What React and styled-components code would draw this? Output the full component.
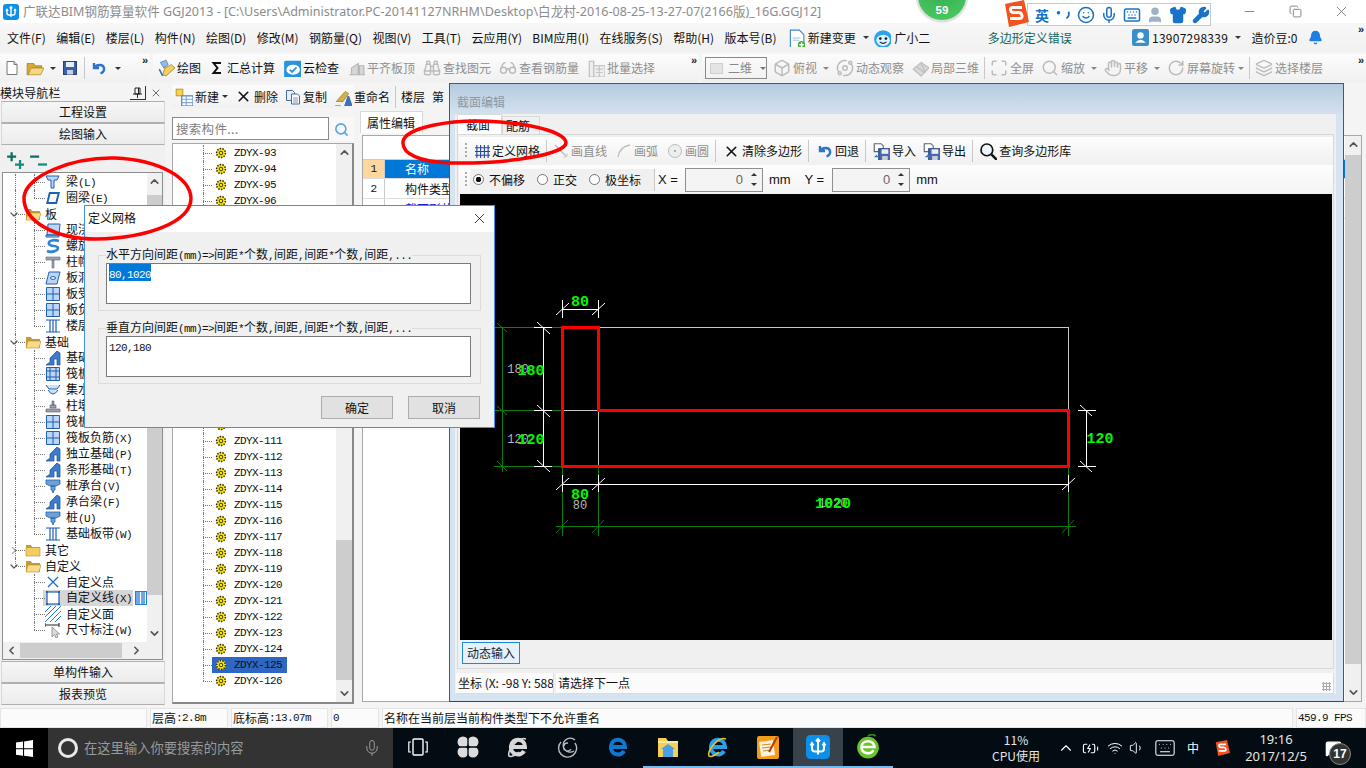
import React from 'react';
import styled, { createGlobalStyle } from 'styled-components';
import {
  Binoculars, Glasses, Box, Orbit, Hand, RotateCw, Layers, Maximize, Search, Smile, Mic, Keyboard, Shirt, Wrench, User, Bell, X,
  Minus, Copy, ChevronDown, ChevronUp, ChevronLeft, ChevronRight, Wifi, Volume1, BatteryCharging, MessageSquare,
} from 'lucide-react';

const CJK = '"Noto Sans CJK SC", "Noto Sans", sans-serif';

const Global = createGlobalStyle`
  html, body { margin: 0; padding: 0; background: #f4f4f4; overflow: hidden; }
  * { box-sizing: border-box; }
  body { font-family: ${CJK}; font-size: 12px; color: #111; }
`;

const Page = styled.div`
  position: relative;
  width: 1366px;
  height: 768px;
  overflow: hidden;
  display: flex;
  flex-direction: column;
  line-height: 16px;
  white-space: nowrap;
`;

/* half-width latin runs, the app draws them in a 6px-per-char bitmap font */
const Half = styled.span`
  font-family: "Liberation Mono", monospace;
  font-size: 11px;
  letter-spacing: -0.6px;
`;

const Sim = ({ children }) => (
  <>
    {String(children).split(/([\x20-\x7e]+)/).map((run, i) => (i % 2 ? <Half key={i}>{run}</Half> : run))}
  </>
);

/* ---------- title bar ---------- */
const TitleBar = styled.div`
  height: 23px;
  flex: none;
  display: flex;
  align-items: center;
  padding-left: 3px;
  background: #fff;
`;
const TitleText = styled.span`
  margin-left: 4px;
  color: #8c8c8c;
  font-family: "Noto Sans", "Noto Sans CJK SC", sans-serif;
  font-size: 12.55px;
`;
const WinButtons = styled.div`
  margin-left: auto;
  padding-right: 2px;
  display: flex;
  color: #8a8a8a;
`;
const WinButton = styled.span`
  width: 46px;
  height: 20px;
  display: flex;
  align-items: center;
  justify-content: center;
`;

/* ---------- menu ---------- */
const MenuBar = styled.div`
  height: 29px;
  flex: none;
  display: flex;
  align-items: center;
  gap: 10.4px;
  padding-left: 7px;
  background: linear-gradient(#f7f7f7, #f1f1f1);
`;
const MenuItem = styled.span`
  display: inline-flex;
  align-items: center;
  gap: 3px;
  margin-left: ${(p) => p.$ml || 0}px;
  color: ${(p) => p.$color || '#111'};
  letter-spacing: ${(p) => p.$spread || 0}px;
`;
const Caret = styled.i`
  display: inline-block;
  width: 0;
  height: 0;
  margin-left: ${(p) => p.$ml ?? 4}px;
  border-left: 3px solid transparent;
  border-right: 3px solid transparent;
  border-top: ${(p) => (p.$up ? 'none' : `3px solid ${p.$color || '#333'}`)};
  border-bottom: ${(p) => (p.$up ? `3px solid ${p.$color || '#333'}` : 'none')};
`;
const More = styled.span`
  font: bold 11px "Liberation Sans", sans-serif;
  color: #222;
  letter-spacing: -1px;
  margin-left: auto;
  align-self: flex-start;
  padding: 0 3px 0 0;
`;

/* ---------- main toolbar ---------- */
const ToolRow = styled.div`
  height: 28px;
  margin-top: 2px;
  flex: none;
  display: flex;
  gap: 3px;
`;
const ToolGroup = styled.div`
  width: ${(p) => p.$w}px;
  flex: none;
  display: flex;
  align-items: center;
  gap: ${(p) => p.$gap ?? 7}px;
  padding-left: ${(p) => p.$pl ?? 4}px;
  background: linear-gradient(#fcfcfc, #f0f0f0);
`;
const Tool = styled.span`
  display: inline-flex;
  align-items: center;
  gap: 2px;
  flex: none;
  margin-left: ${(p) => p.$ml || 0}px;
  color: ${(p) => (p.$dim ? '#8f8f8f' : '#111')};
  svg { flex: none; }
`;
const Sep = styled.i`
  width: 1px;
  height: 22px;
  flex: none;
  margin-left: ${(p) => p.$ml || 0}px;
  background: #c8c8c8;
`;
const Combo = styled.span`
  width: 62px;
  height: 22px;
  flex: none;
  display: inline-flex;
  align-items: center;
  gap: 5px;
  padding-left: 4px;
  border: 1px solid #8a8a8a;
  color: #888;
`;
const ComboSwatch = styled.i`
  width: 15px;
  height: 11px;
  background: #e4e4e4;
  border: 1px solid #d0d0d0;
`;

/* ---------- workspace ---------- */
const Workspace = styled.div`
  height: 624px;
  margin-top: 2px;
  flex: none;
  display: flex;
`;
const Nav = styled.div`
  width: 165px;
  flex: none;
  display: flex;
  flex-direction: column;
`;
const NavHead = styled.div`
  height: 17px;
  flex: none;
  display: flex;
  align-items: center;
  padding-right: 3px;
  letter-spacing: 0.1px;
`;
const NavPin = styled.span`
  margin-left: auto;
  width: 16px;
  height: 14px;
  margin-right: 4px;
  border-bottom: 1px solid #333;
  border-right: 1px solid #333;
  display: flex;
  align-items: center;
  justify-content: center;
`;
const NavButton = styled.div`
  height: 22px;
  margin: 0 0 0 1px;
  flex: none;
  display: flex;
  align-items: center;
  justify-content: center;
  background: linear-gradient(#f6f6f6, #ececec);
  border-top: 1px solid #b0b0b0;
  border-bottom: 1px solid #b0b0b0;
  border-left: 1px solid #d8d8d8;
  border-right: 1px solid #d8d8d8;
`;
const NavBody = styled.div`
  height: 516px;
  flex: none;
  display: flex;
  flex-direction: column;
  padding: 3px 2px 1px 2px;
  background: #f0f0f0;
`;
const ExpandBar = styled.div`
  height: 24px;
  flex: none;
  display: flex;
  align-items: center;
  gap: 5px;
  padding-left: 4px;
`;
const TreeFrame = styled.div`
  flex: 1;
  display: flex;
  flex-direction: column;
  border: 1px solid #8e8e8e;
  background: #fff;
  min-height: 0;
`;
const TreeScrollRow = styled.div`
  flex: 1;
  display: flex;
  min-height: 0;
`;
const TreeList = styled.div`
  flex: 1;
  overflow: hidden;
  padding-top: ${(p) => p.$top}px;
`;
const TreeRow = styled.div`
  position: relative;
  height: 16px;
  display: flex;
  align-items: center;
  padding-left: ${(p) => p.$indent}px;
  &::before {
    content: '';
    position: absolute;
    left: ${(p) => p.$lineX}px;
    top: 0;
    height: ${(p) => (p.$last ? 8 : 16)}px;
    border-left: 1px dotted #777;
  }
  &::after {
    content: '';
    position: absolute;
    left: ${(p) => p.$lineX}px;
    top: 8px;
    width: ${(p) => p.$dash}px;
    border-top: 1px dotted #777;
  }
`;
const RootGuide = styled.i`
  position: absolute;
  left: 12px;
  top: 0;
  height: 16px;
  border-left: 1px dotted #777;
`;
const Fold = styled.span`
  width: 12px;
  flex: none;
  display: flex;
  justify-content: center;
  color: #555;
  margin-right: 5px;
`;
const Label = styled.span`
  margin-left: ${(p) => p.$ml}px;
  padding: 0 1px;
`;
const SelBar = styled.span`
  position: relative;
  display: inline-flex;
  align-items: center;
  margin-left: -2px;
  padding-left: 2px;
  height: 16px;
  background: #d6d6d6;
`;
const SplitMark = styled.i`
  position: relative;
  width: 13px;
  height: 14px;
  margin-left: 2px;
  border: 1px solid #1f7fe0;
  background: repeating-linear-gradient(90deg, #6fa8e8 0 4px, #fff 4px 5px);
`;
const VScroll = styled.div`
  width: ${(p) => p.$w || 15}px;
  flex: none;
  display: flex;
  flex-direction: column;
  align-items: center;
  background: #f0f0f0;
  color: #555;
`;
const ScrollEnd = styled.span`
  height: 17px;
  flex: none;
  width: 100%;
  display: flex;
  align-items: center;
  justify-content: center;
`;
const ScrollSpace = styled.span`
  flex: ${(p) => p.$grow};
  width: 100%;
`;
const ScrollThumb = styled.span`
  flex: ${(p) => p.$grow};
  width: 100%;
  background: #cdcdcd;
`;
const HScroll = styled.div`
  height: 17px;
  flex: none;
  display: flex;
  align-items: center;
  background: #f0f0f0;
  color: #555;
`;
const HThumb = styled.span`
  width: 102px;
  height: 15px;
  background: #cdcdcd;
  margin: 0 6px 0 0;
`;
const HEnd = styled.span`
  width: 17px;
  flex: none;
  display: flex;
  justify-content: center;
`;

/* component tree column */
const ListColumn = styled.div`
  width: 182px;
  margin-left: 7px;
  flex: none;
  display: flex;
  flex-direction: column;
`;
const ListTools = styled.div`
  height: 23px;
  margin-top: 1px;
  flex: none;
  display: flex;
  align-items: center;
  gap: 7px;
  padding-left: 3px;
  background: linear-gradient(#fbfbfb, #f1f1f1);
`;
const SearchRow = styled.div`
  height: 24px;
  margin-top: 9px;
  flex: none;
  display: flex;
  background: #f8f8f8;
`;
const SearchInput = styled.div`
  width: 157px;
  height: 23px;
  padding-left: 3px;
  display: flex;
  align-items: center;
  color: #7d7d7d;
  font-size: 12.5px;
  letter-spacing: 0.3px;
  border: 1px solid #8a8a8a;
  background: #fff;
`;
const SearchIcon = styled.span`
  flex: 1;
  display: flex;
  align-items: center;
  justify-content: center;
  color: #5aa5e6;
`;
const ListFrame = styled.div`
  height: 561px;
  margin-top: 2px;
  display: flex;
  background: #fff;
  border: 1px solid #a8a8a8;
  border-right-width: 2px;
  border-bottom-width: 2px;
  border-bottom-color: #888;
  border-right-color: #888;
`;
const CompList = styled.div`
  flex: 1;
  padding-top: 1px;
  overflow: hidden;
`;
const CompRow = styled.div`
  position: relative;
  height: 16px;
  display: flex;
  align-items: center;
  padding-left: 39px;
  &::before {
    content: '';
    position: absolute;
    left: 30px;
    top: 0;
    height: ${(p) => (p.$last ? 8 : 16)}px;
    border-left: 1px dotted #777;
  }
  &::after {
    content: '';
    position: absolute;
    left: 30px;
    top: 8px;
    width: 9px;
    border-top: 1px dotted #777;
  }
`;
const CompCell = styled.span`
  display: inline-flex;
  align-items: center;
  width: 75px;
  height: 16px;
  gap: 7px;
  background: ${(p) => (p.$active ? '#2d66c3' : 'transparent')};
  padding-left: 3px;
`;

/* property column, mostly behind the section window */
const PropColumn = styled.div`
  width: 1002px;
  margin-left: 6px;
  flex: none;
  display: flex;
  flex-direction: column;
`;
const PropTab = styled.div`
  width: 63px;
  height: 22px;
  margin-top: 27px;
  padding-left: 6px;
  flex: none;
  display: flex;
  align-items: center;
  background: #fff;
  border: 1px solid #d8d8d8;
  border-bottom: none;
`;
const PropFrame = styled.div`
  height: 567px;
  margin: 2px 0 0 2px;
  flex: none;
  display: flex;
  background: #fff;
  border: 1px solid #a8a8a8;
`;
const PropGrid = styled.div`
  flex: 1;
  display: flex;
  flex-direction: column;
`;
const PropHead = styled.div`
  height: 24px;
  border-bottom: 1px solid #ccc;
`;
const PropLine = styled.div`
  height: ${(p) => p.$h}px;
  flex: none;
  display: flex;
  border-bottom: 1px solid #ddd;
`;
const PropIndex = styled.span`
  width: 22px;
  display: flex;
  align-items: center;
  justify-content: center;
  background: ${(p) => (p.$on ? '#fdd79d' : '#fff')};
  border-right: 1px solid #ccc;
`;
const PropName = styled.span`
  flex: 1;
  display: flex;
  align-items: center;
  padding-left: 20px;
  color: ${(p) => p.$color || '#111'};
  background: ${(p) => p.$bg || '#fff'};
`;

/* ---------- section editor window ---------- */
const EditWindow = styled.div`
  position: absolute;
  z-index: 2;
  left: 449px;
  top: 83px;
  width: 895px;
  height: 619px;
  display: flex;
  flex-direction: column;
  border: 1px solid #555;
  border-bottom-color: #444;
  padding: 0 7px 7px 5px;
  background: linear-gradient(#b5cbdf, #d6e3f0 32px);
`;
const EditTitle = styled.div`
  height: 30px;
  flex: none;
  display: flex;
  align-items: center;
  color: #8c98a4;
  padding: 6px 0 0 2px;
`;
const EditClient = styled.div`
  flex: 1;
  display: flex;
  flex-direction: column;
  background: #f0f0f0;
  padding: 0 2px;
  min-height: 0;
`;
const TabRow = styled.div`
  height: 20px;
  flex: none;
  display: flex;
  align-items: flex-end;
`;
const EditTab = styled.span`
  width: ${(p) => p.$w}px;
  height: ${(p) => (p.$active ? 20 : 18)}px;
  display: flex;
  align-items: center;
  padding-left: ${(p) => (p.$active ? 8 : 3)}px;
  background: ${(p) => (p.$active ? '#fff' : '#f0f0f0')};
  border: 1px solid #d9d9d9;
  border-bottom: none;
`;
const TabPane = styled.div`
  height: 535px;
  flex: none;
  display: flex;
  flex-direction: column;
  padding: 2px 0 0 1px;
  border: 1px solid #d9d9d9;
  background: #f0f0f0;
`;
const EditTools = styled.div`
  height: 28px;
  flex: none;
  display: flex;
  align-items: center;
  gap: 6px;
  padding-left: 6px;
  background: linear-gradient(#fdfdfd, #f0f0f0);
`;
const Grip = styled.i`
  width: 2px;
  height: 16px;
  flex: none;
  margin-right: 2px;
  background: repeating-linear-gradient(#aaa 0 2px, transparent 2px 4px);
`;
const CoordBar = styled.div`
  height: 29px;
  flex: none;
  display: flex;
  align-items: center;
  padding-left: 6px;
  background: linear-gradient(#fdfdfd, #f4f4f4);
`;
const ModeBox = styled.div`
  width: 184px;
  height: 22px;
  margin-left: 1px;
  flex: none;
  display: flex;
  align-items: center;
  padding-left: 3px;
  background: #f0f0f0;
`;
const Radio = styled.i`
  width: 11px;
  height: 11px;
  flex: none;
  margin-left: ${(p) => p.$ml || 0}px;
  margin-right: 5px;
  border-radius: 50%;
  border: 1px solid #777;
  background: radial-gradient(circle, ${(p) => (p.$on ? '#111 0 2.5px, #fff 3px' : '#fff 0 100%')});
`;
const CoordText = styled.span`
  margin-left: ${(p) => p.$ml || 0}px;
  flex: none;
  font: 13px "Liberation Sans", sans-serif;
`;
const Spin = styled.div`
  width: 78px;
  height: 24px;
  margin-left: ${(p) => p.$ml}px;
  flex: none;
  display: flex;
  align-items: center;
  justify-content: flex-end;
  padding-right: 19px;
  position: relative;
  color: #666;
  font: 13px "Liberation Sans", sans-serif;
  border: 1px solid #8f8f8f;
  background: #f4f4f4;
`;
const SpinArrows = styled.span`
  position: absolute;
  right: 1px;
  top: 1px;
  bottom: 1px;
  width: 14px;
  display: flex;
  flex-direction: column;
  align-items: center;
  justify-content: space-around;
`;
const Canvas = styled.div`
  height: 446px;
  margin: 0 1px;
  flex: none;
  background: #000;
  svg { display: block; }
`;
const DynamicRow = styled.div`
  flex: 1;
  padding: 2px 0 0 3px;
`;
const DynamicButton = styled.span`
  width: 58px;
  height: 22px;
  display: flex;
  align-items: center;
  justify-content: center;
  color: #222;
  background: #e5f1fb;
  border: 1px solid #1c88d8;
`;
const EditStatus = styled.div`
  height: 25px;
  flex: none;
  display: flex;
  gap: 2px;
  padding: 4px 0 0 0;
  margin-left: -1px;
`;
const EditCell = styled.span`
  width: ${(p) => (p.$w ? `${p.$w}px` : 'auto')};
  flex: ${(p) => (p.$w ? 'none' : 1)};
  position: relative;
  display: flex;
  align-items: center;
  padding-left: 2px;
  overflow: hidden;
  background: #fbfbfb;
  border-bottom: 1px solid #dcdcdc;
  border-right: 1px solid #dcdcdc;
`;
const ResizeGrip = styled.i`
  position: absolute;
  right: 2px;
  bottom: 2px;
  width: 9px;
  height: 9px;
  background: radial-gradient(circle, #aaa 1px, transparent 1.2px) 0 0 / 3px 3px;
`;

/* ---------- define grid dialog ---------- */
const Dialog = styled.div`
  position: absolute;
  z-index: 3;
  left: 84px;
  top: 205px;
  width: 411px;
  height: 223px;
  display: flex;
  flex-direction: column;
  background: #f0f0f0;
  border: 1px solid #3d93e8;
`;
const DialogTitle = styled.div`
  height: 26px;
  flex: none;
  display: flex;
  align-items: center;
  justify-content: space-between;
  padding: 0 6px 2px 3px;
  background: #fff;
`;
const DialogBody = styled.div`
  flex: 1;
  display: flex;
  flex-direction: column;
  gap: 9px;
  padding: 15px 13px 0 13px;
`;
const Group = styled.fieldset`
  margin: 0;
  height: 64px;
  padding: 0 9px 7px 7px;
  border: 1px solid #dcdcdc;
  legend {
    padding: 0;
    height: 16px;
    line-height: 14px;
  }
`;
const GridInput = styled.div`
  height: 41px;
  padding: 2px;
  background: #fff;
  border: 1px solid #7a7a7a;
  line-height: 14px;
`;
const Selected = styled.span`
  background: #0078d7;
  color: #fff;
`;
const DialogButtons = styled.div`
  display: flex;
  justify-content: flex-end;
  gap: 15px;
  margin: 3px 1px 0 0;
`;
const DialogButton = styled.span`
  width: 72px;
  height: 23px;
  display: flex;
  align-items: center;
  justify-content: center;
  background: #e1e1e1;
  border: 1px solid #adadad;
`;

/* ---------- status bar ---------- */
const StatusBar = styled.div`
  height: 20px;
  flex: none;
  display: flex;
  gap: 3px;
`;
const StatusCell = styled.span`
  width: ${(p) => (p.$w ? `${p.$w}px` : 'auto')};
  flex: ${(p) => (p.$w ? 'none' : 1)};
  display: flex;
  align-items: center;
  padding-left: 1px;
  background: #fbfbfb;
  border: 1px solid #e4e4e4;
`;
const FpsText = styled.span`
  font: 11px "Liberation Mono", monospace;
  letter-spacing: -0.6px;
`;

/* ---------- taskbar ---------- */
const TaskBar = styled.div`
  height: 40px;
  flex: none;
  display: flex;
  align-items: stretch;
  color: #fff;
  background: #020c12;
`;
const StartCell = styled.div`
  width: 48px;
  flex: none;
  background: #000;
  display: flex;
  align-items: center;
  justify-content: center;
`;
const SearchBox = styled.div`
  width: 345px;
  flex: none;
  display: flex;
  align-items: center;
  gap: 6px;
  padding: 0 12px 0 10px;
  color: #9a9a9a;
  font-size: 13.3px;
  background: #333;
`;
const Ring = styled.i`
  width: 20px;
  height: 20px;
  flex: none;
  border-radius: 50%;
  border: 3px solid #e8e8e8;
`;
const MicSlot = styled.span`
  margin-left: auto;
  display: flex;
`;
const AppCell = styled.div`
  width: 50px;
  flex: none;
  display: flex;
  align-items: center;
  justify-content: center;
  background: ${(p) => (p.$active ? '#37424a' : 'transparent')};
  border-bottom: 2px solid ${(p) => (p.$running ? '#76b9ed' : 'transparent')};
`;
const CpuCell = styled.div`
  margin-left: auto;
  width: 60px;
  flex: none;
  display: flex;
  flex-direction: column;
  align-items: center;
  justify-content: center;
  color: #e6e6e6;
`;
const TrayCell = styled.span`
  width: ${(p) => p.$w}px;
  flex: none;
  display: flex;
  align-items: center;
  justify-content: center;
  margin-left: ${(p) => p.$ml || 0}px;
`;
const Clock = styled.div`
  width: 72px;
  margin-left: 6px;
  flex: none;
  display: flex;
  flex-direction: column;
  align-items: center;
  justify-content: center;
  font: 13px/17px "Noto Sans", sans-serif;
  color: #e6e6e6;
`;
const Notify = styled.div`
  width: 54px;
  flex: none;
  position: relative;
  display: flex;
  align-items: center;
  justify-content: center;
  padding-right: 12px;
`;
const NotifyBadge = styled.span`
  position: absolute;
  left: 17px;
  top: 15px;
  width: 22px;
  height: 22px;
  border-radius: 50%;
  display: flex;
  align-items: center;
  justify-content: center;
  font: bold 12px "Liberation Sans", sans-serif;
  background: #333;
  border: 1px solid #888;
`;

/* ---------- floating widgets ---------- */
const Badge = styled.div`
  position: absolute;
  z-index: 3;
  left: 918px;
  top: -28px;
  width: 48px;
  height: 48px;
  padding-bottom: 4px;
  border-radius: 50%;
  display: flex;
  align-items: flex-end;
  justify-content: center;
  color: #fff;
  font: bold 11.5px "Liberation Sans", sans-serif;
  background: radial-gradient(circle at 50% 30%, #2fa84f, #4fce63);
  box-shadow: 0 0 0 2px #e0e0e0, 0 1px 3px #777;
`;
const ImeBar = styled.div`
  position: absolute;
  z-index: 3;
  left: 1002px;
  top: 0;
  display: flex;
  align-items: center;
`;
const ImeTray = styled.div`
  height: 23px;
  margin: 2px 0 0 -2px;
  width: 184px;
  display: flex;
  align-items: center;
  gap: 5px;
  padding-left: 7px;
  color: #1a72c8;
  background: #fff;
  border: 1px solid #b9cde0;
  font-weight: 700;
  font-size: 14px;
`;
const Annotations = styled.svg`
  position: absolute;
  z-index: 4;
  left: 0;
  top: 0;
  pointer-events: none;
`;
const LogoLayer = styled.svg`
  position: relative;
  z-index: 1;
  flex: none;
`;

/* ---------- icons ---------- */
const Glyph = ({ s = 16, vb = 16, children }) => (
  <svg width={s} height={s} viewBox={`0 0 ${vb} ${vb}`}>{children}</svg>
);

const SogouS = ({ s = 27 }) => (
  <LogoLayer width={s} height={s} viewBox="0 0 27 27">
    <path d="M3 4L22 0l5 22-20 5z" fill="#f4511e" />
    <path d="M20 7.5H11q-3 0-2.5 2.5t3 2.5h5q3 0 3.5 3t-3 3H8" fill="none" stroke="#fff" strokeWidth="3" />
  </LogoLayer>
);
const GldLogo = ({ s = 16 }) => (
  <Glyph s={s}>
    <rect x="0" y="0" width="16" height="16" rx="3" fill="#0b8fe8" />
    <path d="M8 3v10M4 6.5v2.5a2 2 0 0 0 2 2h4a2 2 0 0 0 2-2V6.5M3 7l1-1.5L5 7M11 7l1-1.5L13 7M6.6 4.2L8 2.8l1.4 1.4" stroke="#fff" strokeWidth="1.4" fill="none" />
  </Glyph>
);
const NewFile = () => (
  <Glyph><path d="M3 1.5h7l3 3v10H3z" fill="#fff" stroke="#777" /><path d="M10 1.5v3h3" fill="#ddd" stroke="#777" /></Glyph>
);
const OpenFolder = () => (
  <Glyph s={18}><path d="M1 4h6l1 2h6v2H5L2 14H1z" fill="#d9a93a" stroke="#96701c" strokeWidth=".6" /><path d="M4.5 8H16l-3 6H2z" fill="#f6d680" stroke="#b58a2a" strokeWidth=".7" /></Glyph>
);
const SaveDisk = ({ s = 16 }) => (
  <Glyph s={s}><rect x="1.5" y="1.5" width="13" height="13" fill="#3b5fa8" stroke="#26427c" /><rect x="4" y="2" width="8" height="5" fill="#e6edf8" /><rect x="5" y="10" width="6" height="4.5" fill="#c7cfdd" /></Glyph>
);
const UndoArrow = ({ s = 16 }) => (
  <Glyph s={s}><path d="M3 3v5h5M3.5 8C5 4.5 12 3.5 13 8c.5 2.5-1 4.5-3.5 5.5" fill="none" stroke="#2f74c9" strokeWidth="2.4" /></Glyph>
);
const DrawPen = () => (
  <Glyph s={18}><path d="M3 3l5-2 2 4-4 3z" fill="#8fbce8" stroke="#3c6ea8" strokeWidth=".6" /><path d="M7 8l6-3 3 3-8 7-3-1z" fill="#f3cf62" stroke="#a77f1e" strokeWidth=".7" /><path d="M2 9l3 6" stroke="#3c6ea8" strokeWidth="1.4" /></Glyph>
);
const SigmaIcon = () => (
  <Glyph><path d="M12 3H4.5l4 5-4 5H12" fill="none" stroke="#111" strokeWidth="2" /></Glyph>
);
const CloudCheck = () => (
  <Glyph s={18}><rect x="1" y="1.5" width="16" height="15" rx="1.5" fill="#2a93dc" /><ellipse cx="9" cy="9.5" rx="6" ry="4.5" fill="#fff" /><path d="M6 9.5l2 2 4-4" fill="none" stroke="#2a93dc" strokeWidth="1.5" /></Glyph>
);
const AlignIcon = () => (
  <Glyph s={18}><path d="M2 14h14M4 14V8l6-4v10M11 14V6h4v8" fill="#d6d6d6" stroke="#b5b5b5" /></Glyph>
);
const BatchIcon = () => (
  <Glyph s={18}><path d="M2 2h4v14H2zM6 6h10v10H6z" fill="#eee" stroke="#bbb" /><path d="M8 9h6M8 12h6M11 6v10" stroke="#c6c6c6" /></Glyph>
);
const PartIcon = () => (
  <Glyph s={18}><path d="M2 9l7-6 7 5-7 7z" fill="#d8d8d8" stroke="#bbb" /><path d="M5 7l7 5M9 4l4 8" stroke="#bbb" fill="none" /></Glyph>
);
const NewComp = () => (
  <Glyph s={18}><rect x="1" y="1" width="6" height="6" fill="#f6d24e" stroke="#b08a1c" strokeWidth=".7" /><rect x="6" y="7" width="10" height="9" fill="#fff" stroke="#3f78b8" /><path d="M6 10h10M6 13h10M10 7v9" stroke="#7ea6d6" /></Glyph>
);
const CopyIcon = () => (
  <Glyph><path d="M1.5 1.5h6l2 2v8h-8z" fill="#e6eef9" stroke="#4a6c9a" /><path d="M6.5 5h6l2 2v8h-8z" fill="#fff" stroke="#4a6c9a" /><path d="M8 9h5M8 11h5M8 13h5" stroke="#7b96b8" /></Glyph>
);
const RenameIcon = () => (
  <Glyph s={18}><path d="M2 12l8-9 3 2-5 7z" fill="#d4b248" stroke="#8a7024" strokeWidth=".6" /><path d="M9 16l3-9 1.5 0 3 9z" fill="#3f6fbd" /><path d="M1 16h5" stroke="#666" /></Glyph>
);
const GridIcon = () => (
  <Glyph s={15}><path d="M2 1v14M6 1v14M10 1v14M14 1v14M0 4h16M0 8h16M0 12h16" stroke="#24459c" strokeWidth="1.2" /></Glyph>
);
const LineIcon = () => (
  <Glyph><path d="M2 2l11 11" stroke="#bbb" strokeWidth="1.4" /><path d="M10 14h4v-4" fill="none" stroke="#cfcfcf" /></Glyph>
);
const ArcIcon = () => (
  <Glyph><path d="M2 14C3 7 8 3 14 2" fill="none" stroke="#bbb" strokeWidth="1.3" /></Glyph>
);
const CircleIcon = () => (
  <Glyph><circle cx="8" cy="8" r="6.5" fill="#eee" stroke="#bbb" /><circle cx="8" cy="8" r="1" fill="#999" /></Glyph>
);
const ImportIcon = ({ out }) => (
  <Glyph s={18}><path d="M2 1.5h6l2 2v5H2z" fill="#fff" stroke="#567" /><rect x="6" y="6" width="11" height="11" fill="#4a67ad" stroke="#2c447e" /><rect x="8.5" y="6.5" width="6" height="4" fill="#e8eef8" /><rect x="9" y="12.5" width="5" height="4" fill="#ccd" /><path d={out ? 'M3 13h3l-1.5-1.5' : 'M6 13H3l1.5-1.5'} stroke="#2f80c9" fill="none" /></Glyph>
);
const MagnifyIcon = () => (
  <Glyph s={18}><circle cx="7" cy="7" r="5.2" fill="#eef6ff" stroke="#111" strokeWidth="1.5" /><path d="M11 11l6 6" stroke="#111" strokeWidth="2.2" /></Glyph>
);
const ChangeDoc = () => (
  <Glyph s={18}><path d="M3 1h8l4 4v12H3z" fill="#fff" stroke="#3a86d0" /><path d="M5 8h7M5 10h6" stroke="#9cc3e8" /><circle cx="13" cy="14" r="3.4" fill="#4cae3f" /><path d="M13 12v4M11 14h4" stroke="#fff" strokeWidth="1.2" /></Glyph>
);
const Mascot = () => (
  <Glyph s={18}><circle cx="9" cy="9" r="8" fill="#2aa4ee" /><ellipse cx="9" cy="10" rx="6" ry="5" fill="#dff3ff" /><circle cx="6.5" cy="8.5" r="1.2" fill="#123" /><circle cx="11.5" cy="8.5" r="1.2" fill="#123" /><path d="M6 11.5q3 2.5 6 0" stroke="#123" fill="none" /></Glyph>
);
const PinIcon = () => (
  <Glyph s={11} vb={11}><path d="M3 1h5v6H3zM1 7h9M5.5 7v4M6.5 1v6" fill="none" stroke="#222" /></Glyph>
);
const ExpandAll = ({ plus }) => (
  <Glyph s={18}>
    <path d={plus ? 'M1 5h8M5 1v8' : 'M1 5h8'} stroke="#0d6d62" strokeWidth="2" />
    <path d={plus ? 'M8 12h9M12.5 8v9' : 'M8 12h9'} stroke="#0f8d7f" strokeWidth="2" />
  </Glyph>
);
const FolderIcon = ({ open }) => (
  <Glyph>
    <path d="M1 3h5l1 2h8v9H1z" fill="#c99a2e" />
    <path d={open ? 'M3 7h13l-2 7H1z' : 'M1 5.5h14V14H1z'} fill={open ? '#f7dc8c' : '#f3cd5f'} stroke="#b98d2a" strokeWidth=".6" />
  </Glyph>
);
const GearDot = () => (
  <Glyph s={12} vb={12}>
    <circle cx="6" cy="6" r="5" fill="#ffe800" />
    <circle cx="6" cy="6" r="4.4" fill="none" stroke="#222" strokeWidth="1.5" strokeDasharray="1.4 1.3" />
    <circle cx="6" cy="6" r="1.8" fill="none" stroke="#333" />
  </Glyph>
);

const blue = { stroke: '#1f5fb4', fill: '#bcd5f2' };
const treeArt = {
  beam: <path d="M1 2h13l-2 4H9v8H6V6H3z" {...blue} />,
  ring: <path d="M4 2h11l-3 12H1zM5.5 4l-2 8h7l2-8z" fill="#1f5fb4" fillRule="evenodd" />,
  slab: <path d="M3 2h12l-1 11H2zM1 13h13v2H1z" {...blue} />,
  spiral: <path d="M14 3C8 1 3 3 4 6s9 1 9 4-7 5-11 3" fill="none" stroke="#2d83d8" strokeWidth="2.6" />,
  cap: <path d="M1 3h14v3H1zM7 6h2v8H7z" fill="#9aa4b0" stroke="#667" strokeWidth=".6" />,
  hole: <g><path d="M4 2h11l-3 12H1z" {...blue} /><ellipse cx="8" cy="8" rx="2.6" ry="1.4" fill="#fff" stroke="#1f5fb4" /></g>,
  net: <path d="M1.5 1.5h13v13h-13zM8 1.5v13M1.5 8h13" {...blue} />,
  band: <path d="M1 2h14M1 14h14M5 2v12M11 2v12M8 2v12" stroke="#1f5fb4" fill="none" strokeWidth="1.2" />,
  footing: <path d="M1 15l4-3V8l7-7 3 2v12h-3V9H9v6z" fill="#3e7cc8" stroke="#1b4f96" strokeWidth=".7" />,
  raft: <path d="M1.5 1.5h13v13h-13zM5 1.5v13M11 1.5v13M1.5 5h13M1.5 11h13" {...blue} />,
  pit: <path d="M1 3l3 4h8l3-4M3 8q5 8 10 0" fill="#cfe2f5" stroke="#1f5fb4" />,
  pier: <path d="M5 7h6v3H5zM1 11h14v3H1zM7 3h2v4H7z" fill="#9aa4b0" stroke="#556" strokeWidth=".6" />,
  capBlue: <path d="M1 2h14v4l-4 2H5L1 6zM6 8h4v4H9l-1 3-1-3H6z" fill="#6f9fd6" stroke="#1f5fb4" strokeWidth=".8" />,
  point: <path d="M3 3l10 10M13 3L3 13" stroke="#1f6fc8" strokeWidth="1.3" />,
  line: <g><rect x="2" y="2" width="12" height="12" fill="#fff" stroke="#1f5fb4" strokeWidth="1.2" /><path d="M1 1h2v2H1zM13 1h2v2h-2zM1 13h2v2H1zM13 13h2v2h-2z" fill="#1f5fb4" /></g>,
  face: <path d="M0 6l6-6M0 11L11 0M0 16L16 0M5 16L16 5M10 16l6-6" stroke="#2a78d0" />,
  dim: <g><path d="M0 1v4M14 1v4M0 3h14" stroke="#222" /><path d="M7 5v10l2.5-2.5L11 16l2-1-1.5-3h3z" fill="#ddd" stroke="#777" strokeWidth=".7" /></g>,
};
const TreeIcon = ({ k }) => <Glyph>{treeArt[k]}</Glyph>;

const WinLogo = () => (
  <Glyph s={17}><path d="M0 2.4L6.6 1.4v6.3H0zM7.6 1.3L16 0v7.7H7.6zM0 8.6h6.6v6.2L0 13.8zM7.6 8.6H16V16l-8.4-1.2z" fill="#fff" /></Glyph>
);
const TaskView = () => (
  <Glyph s={20} vb={20}><rect x="5" y="2" width="10" height="16" rx="1" fill="none" stroke="#fff" strokeWidth="1.4" /><path d="M3 5H0.8v10H3M17 5h2.2v10H17" fill="none" stroke="#fff" strokeWidth="1.2" /></Glyph>
);
const Pinwheel = () => (
  <Glyph s={24} vb={24}><g fill="#dcdcdc"><circle cx="7" cy="7" r="5.5" /><circle cx="17" cy="7" r="5.5" /><circle cx="7" cy="17" r="5.5" /><circle cx="17" cy="17" r="5.5" /></g><path d="M12 2v9M22 12h-9M12 22v-9M2 12h9" stroke="#020c12" strokeWidth="1.4" /></Glyph>
);
const EMark = ({ c, s = 24, orbit }) => (
  <Glyph s={s} vb={24}>
    <path d="M5 12h14c0-9-13-10-14-1s10 11 13 5" fill="none" stroke={c} strokeWidth="4" />
    {orbit && <path d="M20 4C12 1 1 16 3 21c2 2 8-2 10-4" fill="none" stroke={orbit} strokeWidth="1.6" />}
  </Glyph>
);
const Swirl = () => (
  <Glyph s={22} vb={22}><path d="M4 6a9 9 0 1 0 14 1M18 4A7 7 0 1 0 17 15M11 7a4 4 0 1 0 3 6" fill="none" stroke="#bbb" strokeWidth="1.4" /></Glyph>
);
const ExplorerIcon = () => (
  <Glyph s={24} vb={24}><path d="M2 3h8l2 3h10v16H2z" fill="#f6cf56" /><rect x="2" y="6" width="20" height="2" fill="#fbe8a2" /><rect x="7" y="14" width="10" height="8" fill="#4aa0e6" /><path d="M5 14l7-5 7 5z" fill="#4aa0e6" /></Glyph>
);
const NoteIcon = () => (
  <Glyph s={24} vb={24}><rect x="1" y="1" width="22" height="23" rx="2" fill="#f49b19" /><rect x="4" y="6" width="14" height="15" fill="#fdf3da" transform="rotate(-8 11 13)" /><path d="M6 10l9-1M6 13l9-1M7 16l8-1" stroke="#c68b3a" /><path d="M21 2L13 17" stroke="#b83a12" strokeWidth="2" /></Glyph>
);
const GreenE = () => (
  <Glyph s={26} vb={24}><circle cx="12" cy="12.5" r="10" fill="#67c52a" /><path d="M6 12h12c0-7-12-7-12 0s9 7 11 3" fill="none" stroke="#fff" strokeWidth="2.4" /><path d="M12 2q4-3 7 0" stroke="#2f8c1a" strokeWidth="1.6" fill="none" /></Glyph>
);

/* ---------- data ---------- */
const menus = ['文件(F)', '编辑(E)', '楼层(L)', '构件(N)', '绘图(D)', '修改(M)', '钢筋量(Q)', '视图(V)', '工具(T)', '云应用(Y)', 'BIM应用(I)', '在线服务(S)', '帮助(H)', '版本号(B)'];

const navTree = [
  { k: 'beam', t: '梁(L)' }, { k: 'ring', t: '圈梁(E)', last: true },
  { root: true, open: true, t: '板' },
  { k: 'slab', t: '现浇板(B)' }, { k: 'spiral', t: '螺旋板(B)' }, { k: 'cap', t: '柱帽(V)' }, { k: 'hole', t: '板洞(N)' },
  { k: 'net', t: '板受力筋(S)' }, { k: 'net', t: '板负筋(F)' }, { k: 'band', t: '楼层板带(H)', last: true },
  { root: true, open: true, t: '基础' },
  { k: 'footing', t: '基础梁(F)' }, { k: 'raft', t: '筏板基础(M)' }, { k: 'pit', t: '集水坑(K)' }, { k: 'pier', t: '柱墩(Y)' },
  { k: 'net', t: '筏板主筋(R)' }, { k: 'net', t: '筏板负筋(X)' }, { k: 'footing', t: '独立基础(P)' }, { k: 'footing', t: '条形基础(T)' },
  { k: 'capBlue', t: '桩承台(V)' }, { k: 'footing', t: '承台梁(F)' }, { k: 'capBlue', t: '桩(U)' }, { k: 'band', t: '基础板带(W)', last: true },
  { root: true, t: '其它' },
  { root: true, open: true, t: '自定义', end: true },
  { k: 'point', t: '自定义点' }, { k: 'line', t: '自定义线(X)', sel: true }, { k: 'face', t: '自定义面' }, { k: 'dim', t: '尺寸标注(W)', last: true },
];

const comps = Array.from({ length: 34 }, (_, i) => 93 + i);

const grayTools = [
  { icon: <AlignIcon />, label: '平齐板顶' },
  { icon: <Binoculars size={18} color="#bcbcbc" />, label: '查找图元' },
  { icon: <Glasses size={18} color="#bcbcbc" />, label: '查看钢筋量' },
  { icon: <BatchIcon />, label: '批量选择' },
];

const SectionDrawing = () => (
  <svg width="872" height="446" viewBox="460 194 872 446" shapeRendering="crispEdges">
    <path d="M562 327.5H1068M562 410.5H1068M598.5 327V466M1068.5 327V466" stroke="#c8c8c8" fill="none" />
    <g stroke="#0a7d0a" fill="none">
      <path d="M495 327.5H534M495 410.5H534M494 466.5H534M552 327.5H562M552 410.5H562M552 466.5H562M502.5 327V472" />
      <path d="M562.5 467V536M598.5 467V536M1068.5 467V536M556 526.5H1076" />
      <path shapeRendering="auto" d="M497 323L507 332M497 406L507 415M497 461L507 471M556 533L568 520M592 533L604 520M1062 533L1074 520" />
    </g>
    <g stroke="#fff" fill="none">
      <path d="M562.5 300V318M598.5 300V318M562 309.5H598" />
      <path d="M543.5 327V466M534 327.5H552M534 410.5H552M534 466.5H552" />
      <path d="M562.5 475V492M598.5 475V492M1068.5 475V492M562 484.5H1068" />
      <path d="M1086.5 410V466M1078 410.5H1096M1078 466.5H1096" />
      <path shapeRendering="auto" d="M556 315L569 303M592 315L605 303M537 322L550 334M537 405L550 417M537 460L550 472M556 490L569 478M592 490L605 478M1062 490L1075 478M1080 405L1092 416M1080 461L1092 472" />
    </g>
    <path d="M562.5 327.5H598.5V410.5H1068.5V466.5H562.5Z" fill="none" stroke="#f00" strokeWidth="3" />
    <g shapeRendering="auto" fontFamily='"Liberation Mono", monospace' textAnchor="middle">
      <g fill="#b8b8b8" fontSize="12">
        <text x="518" y="373">180</text>
        <text x="518" y="443">120</text>
        <text x="580" y="509">80</text>
        <text x="833" y="507">1020</text>
      </g>
      <g fill="#00f800" fontSize="15" fontWeight="700">
        <text x="580" y="306">80</text>
        <text x="531" y="375">180</text>
        <text x="531" y="444">120</text>
        <text x="580" y="499">80</text>
        <text x="833" y="508">1020</text>
        <text x="1100" y="443">120</text>
      </g>
    </g>
  </svg>
);

const Scrollbar = ({ w, before, thumb, after }) => (
  <VScroll $w={w}>
    <ScrollEnd><ChevronUp size={13} strokeWidth={3} /></ScrollEnd>
    <ScrollSpace $grow={before} />
    <ScrollThumb $grow={thumb} />
    <ScrollSpace $grow={after} />
    <ScrollEnd><ChevronDown size={13} strokeWidth={3} /></ScrollEnd>
  </VScroll>
);

const SpinBox = ({ ml }) => (
  <Spin $ml={ml}>
    0
    <SpinArrows><Caret $ml={0} $up /><Caret $ml={0} /></SpinArrows>
  </Spin>
);

const NavNode = ({ n }) => {
  if (n.root) {
    return (
      <TreeRow $indent={5} $lineX={12} $dash={10} $last={n.end}>
        <Fold>{n.open ? <ChevronDown size={13} strokeWidth={2.4} /> : <ChevronRight size={13} strokeWidth={2.4} color="#aaa" />}</Fold>
        <FolderIcon open={n.open} />
        <Label $ml={3}>{n.t}</Label>
      </TreeRow>
    );
  }
  return (
    <TreeRow $indent={42} $lineX={31} $dash={11} $last={n.last}>
      {n.k !== 'point' && n.k !== 'line' && n.k !== 'face' && n.k !== 'dim' && <RootGuide />}
      {n.sel ? (
        <>
          <SelBar><TreeIcon k={n.k} /><Label $ml={4}><Sim>{n.t}</Sim></Label></SelBar>
          <SplitMark />
        </>
      ) : (
        <>
          <TreeIcon k={n.k} />
          <Label $ml={4}><Sim>{n.t}</Sim></Label>
        </>
      )}
    </TreeRow>
  );
};

export default function App() {
  return (
    <Page>
      <Global />
      <TitleBar>
        <GldLogo />
        <TitleText>广联达BIM钢筋算量软件 GGJ2013 - [C:\Users\Administrator.PC-20141127NRHM\Desktop\白龙村-2016-08-25-13-27-07(2166版)_16G.GGJ12]</TitleText>
        <WinButtons>
          <WinButton><Minus size={15} strokeWidth={1} absoluteStrokeWidth /></WinButton>
          <WinButton><Copy size={13} strokeWidth={1} absoluteStrokeWidth /></WinButton>
          <WinButton><X size={17} strokeWidth={1} absoluteStrokeWidth /></WinButton>
        </WinButtons>
      </TitleBar>

      <MenuBar>
        {menus.map((m) => <MenuItem key={m}>{m}</MenuItem>)}
        <MenuItem><ChangeDoc />新建变更<Caret /></MenuItem>
        <MenuItem $ml={-6}><Mascot />广小二</MenuItem>
        <MenuItem $ml={47} $color="#0e6663">多边形定义错误</MenuItem>
        <MenuItem $ml={50} $spread={0.25}><Glyph s={17}><rect width="16" height="16" rx="2" fill="#3a8fc8" /><circle cx="8" cy="6" r="3" fill="#fff" /><path d="M3 13q5-6 10 0z" fill="#fff" /></Glyph>13907298339<Caret /></MenuItem>
        <MenuItem>造价豆:0</MenuItem>
        <MenuItem><Bell size={15} fill="#1e7fe0" color="#1e7fe0" /></MenuItem>
        <More>»</More>
      </MenuBar>

      <ToolRow>
        <ToolGroup $w={150} $pl={4} $gap={6}>
          <NewFile /><OpenFolder /><Caret $ml={0} /><SaveDisk />
          <Sep />
          <UndoArrow /><Caret $ml={2} />
          <More>»</More>
        </ToolGroup>
        <ToolGroup $w={546} $gap={8}>
          <Tool><DrawPen />绘图</Tool>
          <Tool><SigmaIcon />汇总计算</Tool>
          <Tool><CloudCheck />云检查</Tool>
          {grayTools.map((t) => <Tool key={t.label} $dim>{t.icon}{t.label}</Tool>)}
          <More>»</More>
        </ToolGroup>
        <ToolGroup $w={664} $pl={3} $gap={7}>
          <Combo><ComboSwatch />二维<Caret $ml={3} $color="#777" /></Combo>
          <Tool $dim $ml={-1}><Box size={18} color="#bcbcbc" />俯视<Caret $color="#888" /></Tool>
          <Tool $dim><Orbit size={18} color="#bcbcbc" />动态观察</Tool>
          <Tool $dim><PartIcon />局部三维</Tool>
          <Sep $ml={-2} />
          <Tool $dim $ml={-2}><Maximize size={18} color="#bcbcbc" />全屏</Tool>
          <Tool $dim><Search size={18} color="#bcbcbc" />缩放<Caret $color="#888" /></Tool>
          <Tool $dim><Hand size={18} color="#bcbcbc" />平移<Caret $color="#888" /></Tool>
          <Tool $dim><RotateCw size={18} color="#bcbcbc" />屏幕旋转<Caret $ml={1} $color="#888" /></Tool>
          <Sep $ml={-2} />
          <Tool $dim $ml={-2}><Layers size={18} color="#bcbcbc" />选择楼层</Tool>
          <More>»</More>
        </ToolGroup>
      </ToolRow>

      <Workspace>
        <Nav>
          <NavHead>
            模块导航栏
            <NavPin><PinIcon /></NavPin>
            <X size={12} strokeWidth={1.2} />
          </NavHead>
          <NavButton>工程设置</NavButton>
          <NavButton>绘图输入</NavButton>
          <NavBody>
            <ExpandBar><ExpandAll plus /><ExpandAll /></ExpandBar>
            <TreeFrame>
              <TreeScrollRow>
                <TreeList $top={1}>
                  {navTree.map((n) => <NavNode key={n.t} n={n} />)}
                </TreeList>
                <Scrollbar before={5} thumb={400} after={30} />
              </TreeScrollRow>
              <HScroll>
                <HEnd><ChevronLeft size={13} strokeWidth={3} /></HEnd>
                <HThumb />
                <HEnd><ChevronRight size={13} strokeWidth={3} /></HEnd>
              </HScroll>
            </TreeFrame>
          </NavBody>
          <NavButton>单构件输入</NavButton>
          <NavButton>报表预览</NavButton>
        </Nav>

        <ListColumn>
          <ListTools>
            <Tool><NewComp />新建<Caret $ml={1} /></Tool>
            <Tool><X size={17} strokeWidth={2.2} />删除</Tool>
            <Tool><CopyIcon />复制</Tool>
            <Tool><RenameIcon />重命名</Tool>
            <Sep $ml={-2} />
            <Tool $ml={-2}>楼层</Tool>
            <Tool>第</Tool>
          </ListTools>
          <SearchRow>
            <SearchInput>搜索构件...</SearchInput>
            <SearchIcon><Search size={15} strokeWidth={2.6} /></SearchIcon>
          </SearchRow>
          <ListFrame>
            <CompList>
              {comps.map((n) => (
                <CompRow key={n} $last={n === 126}>
                  <CompCell $active={n === 125}><GearDot /><Half>ZDYX-{n}</Half></CompCell>
                </CompRow>
              ))}
            </CompList>
            <Scrollbar w={16} before={380} thumb={141} after={5} />
          </ListFrame>
        </ListColumn>

        <PropColumn>
          <PropTab>属性编辑</PropTab>
          <PropFrame>
            <PropGrid>
              <PropHead />
              <PropLine $h={19}><PropIndex $on><Half>1</Half></PropIndex><PropName $color="#fff" $bg="#0078d7">名称</PropName></PropLine>
              <PropLine $h={20}><PropIndex><Half>2</Half></PropIndex><PropName>构件类型</PropName></PropLine>
              <PropLine $h={20}><PropIndex><Half>3</Half></PropIndex><PropName $color="#1a1ad8">截面形状</PropName></PropLine>
            </PropGrid>
            <Scrollbar w={16} before={2} thumb={520} after={20} />
          </PropFrame>
        </PropColumn>
      </Workspace>

      <StatusBar>
        <StatusCell $w={147} />
        <StatusCell $w={78}><Sim>层高:2.8m</Sim></StatusCell>
        <StatusCell $w={97}><Sim>底标高:13.07m</Sim></StatusCell>
        <StatusCell $w={48}><Sim>0</Sim></StatusCell>
        <StatusCell>名称在当前层当前构件类型下不允许重名</StatusCell>
        <StatusCell $w={70}><FpsText>459.9 FPS</FpsText></StatusCell>
      </StatusBar>

      <TaskBar>
        <StartCell><WinLogo /></StartCell>
        <SearchBox>
          <Ring />
          在这里输入你要搜索的内容
          <MicSlot><Mic size={18} strokeWidth={1.3} color="#9a9a9a" /></MicSlot>
        </SearchBox>
        <AppCell><TaskView /></AppCell>
        <AppCell><Pinwheel /></AppCell>
        <AppCell><EMark c="#d8d8d8" orbit="#d8d8d8" /></AppCell>
        <AppCell><Swirl /></AppCell>
        <AppCell><EMark c="#0f78d4" /></AppCell>
        <AppCell $running><ExplorerIcon /></AppCell>
        <AppCell $running><EMark c="#2aa0e8" orbit="#f2c318" /></AppCell>
        <AppCell $running><NoteIcon /></AppCell>
        <AppCell $running $active><GldLogo s={24} /></AppCell>
        <AppCell $running><GreenE /></AppCell>
        <CpuCell><span>11%</span><span>CPU使用</span></CpuCell>
        <TrayCell $w={24} $ml={8}><ChevronUp size={18} strokeWidth={1.5} /></TrayCell>
        <TrayCell $w={25}><BatteryCharging size={17} strokeWidth={1.6} /></TrayCell>
        <TrayCell $w={24}><Wifi size={16} strokeWidth={1.5} /></TrayCell>
        <TrayCell $w={20}><Volume1 size={16} strokeWidth={1.4} /></TrayCell>
        <TrayCell $w={30} $ml={3}><Keyboard size={22} strokeWidth={1.1} /></TrayCell>
        <TrayCell $w={26}>中</TrayCell>
        <TrayCell $w={24} $ml={4}><SogouS s={16} /></TrayCell>
        <Clock><span>19:16</span><span>2017/12/5</span></Clock>
        <Notify>
          <MessageSquare size={17} fill="#fff" color="#fff" />
          <NotifyBadge>17</NotifyBadge>
        </Notify>
      </TaskBar>

      <EditWindow>
        <EditTitle>截面编辑</EditTitle>
        <EditClient>
          <TabRow>
            <EditTab $w={45} $active>截面</EditTab>
            <EditTab $w={38}>配筋</EditTab>
          </TabRow>
          <TabPane>
            <EditTools>
              <Grip />
              <Tool><GridIcon />定义网格</Tool>
              <Sep />
              <Tool $dim><LineIcon />画直线</Tool>
              <Tool $dim $ml={3}><ArcIcon />画弧</Tool>
              <Tool $dim $ml={3}><CircleIcon />画圆</Tool>
              <Sep />
              <Tool $ml={1}><X size={17} strokeWidth={2.2} />清除多边形</Tool>
              <Sep />
              <Tool $ml={2}><UndoArrow />回退</Tool>
              <Sep />
              <Tool><ImportIcon />导入</Tool>
              <Tool><ImportIcon out />导出</Tool>
              <Sep />
              <Tool><MagnifyIcon />查询多边形库</Tool>
            </EditTools>
            <CoordBar>
              <Grip />
              <ModeBox>
                <Radio $on />不偏移
                <Radio $ml={12} />正交
                <Radio $ml={12} />极坐标
              </ModeBox>
              <Sep />
              <CoordText $ml={3}>X =</CoordText>
              <SpinBox ml={7} />
              <CoordText $ml={6}>mm</CoordText>
              <CoordText $ml={14}>Y =</CoordText>
              <SpinBox ml={8} />
              <CoordText $ml={6}>mm</CoordText>
            </CoordBar>
            <Canvas><SectionDrawing /></Canvas>
            <DynamicRow><DynamicButton>动态输入</DynamicButton></DynamicRow>
          </TabPane>
          <EditStatus>
            <EditCell $w={98}>坐标 (X: -98 Y: 588</EditCell>
            <EditCell>请选择下一点<ResizeGrip /></EditCell>
          </EditStatus>
        </EditClient>
      </EditWindow>

      <Dialog>
        <DialogTitle>定义网格<X size={17} strokeWidth={1.1} /></DialogTitle>
        <DialogBody>
          <Group>
            <legend><Sim>水平方向间距(mm)=&gt;间距*个数,间距,间距*个数,间距,...</Sim></legend>
            <GridInput><Selected><Half>80,1020</Half></Selected></GridInput>
          </Group>
          <Group>
            <legend><Sim>垂直方向间距(mm)=&gt;间距*个数,间距,间距*个数,间距,...</Sim></legend>
            <GridInput><Half>120,180</Half></GridInput>
          </Group>
          <DialogButtons>
            <DialogButton>确定</DialogButton>
            <DialogButton>取消</DialogButton>
          </DialogButtons>
        </DialogBody>
      </Dialog>

      <Badge>59</Badge>
      <ImeBar>
        <SogouS s={27} />
        <ImeTray>
          英
          <Glyph s={18}><circle cx="4" cy="6" r="1.6" fill="#1a72c8" /><path d="M13 5q1 4-2 6" stroke="#1a72c8" strokeWidth="1.6" fill="none" /></Glyph>
          <Smile size={18} />
          <Mic size={18} />
          <Keyboard size={18} />
          <User size={18} color="#9db2c8" fill="#9db2c8" />
          <Shirt size={18} fill="#1a72c8" />
          <Wrench size={18} fill="#1a72c8" />
        </ImeTray>
      </ImeBar>

      <Annotations width="1366" height="768">
        <g fill="none" stroke="#f00" strokeWidth="3.5">
          <path d="M24 197C26 176 72 157 115 158C160 160 190 178 191 198C191 222 148 238 96 239C56 239 23 222 24 197Z" />
          <path d="M403 142C404 128 450 118 500 122C540 125 566 134 566 143C565 154 510 164 450 163C420 162 402 154 403 142Z" />
        </g>
      </Annotations>
    </Page>
  );
}
